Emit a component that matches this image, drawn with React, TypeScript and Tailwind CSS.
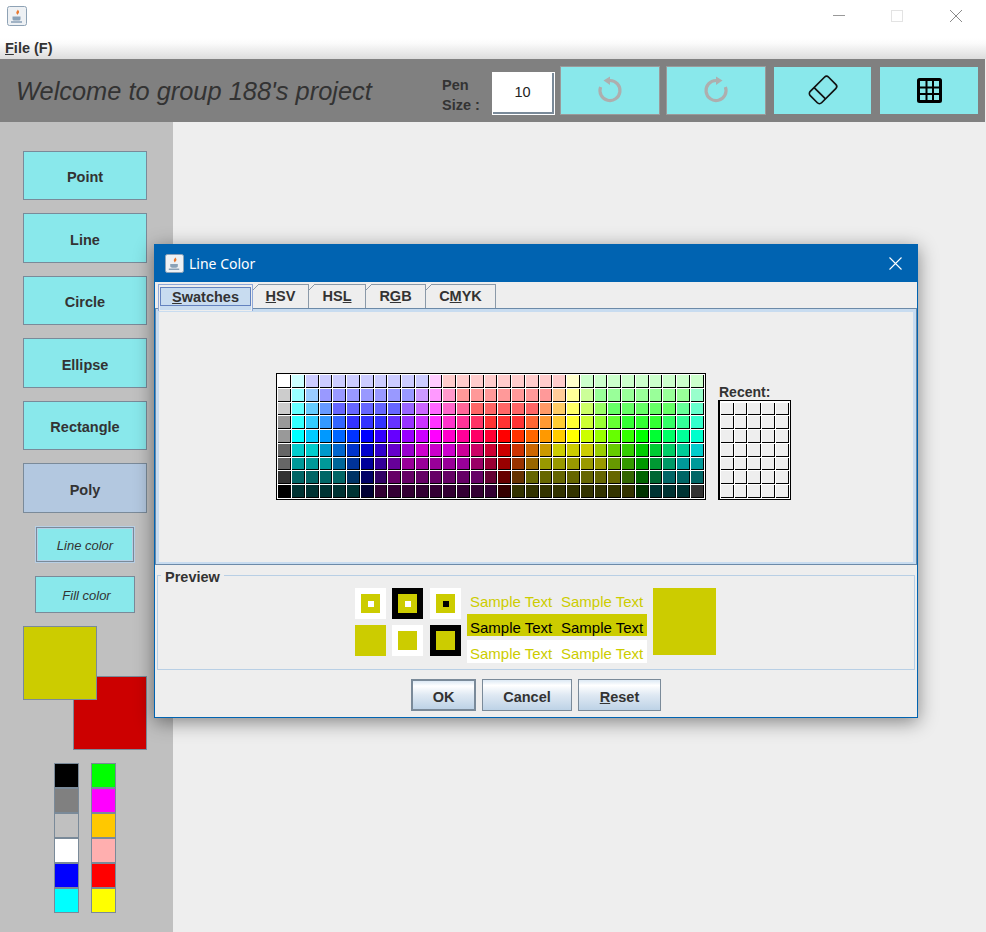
import React from "react";

const swatchRows = [
  "ffffff ccffff ccccff*9 ffccff ffcccc*9 ffffcc ccffcc*9",
  "cccccc 99ffff 99ccff 9999ff*7 cc99ff ff99ff ff99cc ff9999*7 ffcc99 ffff99 ccff99 99ff99*7 99ffcc",
  "cccccc 66ffff 66ccff 6699ff 6666ff*5 9966ff cc66ff ff66ff ff66cc ff6699 ff6666*5 ff9966 ffcc66 ffff66 ccff66 99ff66 66ff66*5 66ff99 66ffcc",
  "999999 33ffff 33ccff 3399ff 3366ff 3333ff*3 6633ff 9933ff cc33ff ff33ff ff33cc ff3399 ff3366 ff3333*3 ff6633 ff9933 ffcc33 ffff33 ccff33 99ff33 66ff33 33ff33*3 33ff66 33ff99 33ffcc",
  "999999 00ffff 00ccff 0099ff 0066ff 0033ff 0000ff 3300ff 6600ff 9900ff cc00ff ff00ff ff00cc ff0099 ff0066 ff0033 ff0000 ff3300 ff6600 ff9900 ffcc00 ffff00 ccff00 99ff00 66ff00 33ff00 00ff00 00ff33 00ff66 00ff99 00ffcc",
  "666666 00cccc*2 0099cc 0066cc 0033cc 0000cc 3300cc 6600cc 9900cc cc00cc*3 cc0099 cc0066 cc0033 cc0000 cc3300 cc6600 cc9900 cccc00*3 99cc00 66cc00 33cc00 00cc00 00cc33 00cc66 00cc99 00cccc",
  "666666 009999*3 006699 003399 000099 330099 660099 990099*5 990066 990033 990000 993300 996600 999900*5 669900 339900 009900 009933 009966 009999*2",
  "333333 006666*4 003366 000066 330066 660066*7 660033 660000 663300 666600*7 336600 006600 006633 006666*3",
  "000000 003333*5 000033 330033*9 330000 333300*9 003300 003333*3 333333",
];

// rows are written as colour*count to keep them short
const swatches = swatchRows.flatMap((row) =>
  row.split(" ").flatMap((part) => {
    const [c, n] = part.split("*");
    return Array.from({ length: Number(n ?? 1) }, () => "#" + c);
  })
);

const paletteLeft = ["#000000", "#808080", "#c0c0c0", "#ffffff", "#0000ff", "#00ffff"];
const paletteRight = ["#00ff00", "#ff00ff", "#ffc800", "#ffafaf", "#ff0000", "#ffff00"];

const JavaIcon = ({ className }: { className?: string }) => (
  <svg viewBox="0 0 20 20" className={className}>
    <rect x="0.5" y="0.5" width="19" height="19" rx="2" fill="#eef1f4" stroke="#8ea2b5" />
    <path d="M10.5 3c1 1.5-2 2.5-1 4.5.3.7.8 1 1 1.500-.1-1 2.200-2 1.500-3.500C11.700 4.500 10.800 4 10.500 3z" fill="#e8772e" />
    <path d="M5.500 10.500h8v2.500c0 1-1 1.500-2 1.500h-4c-1 0-2-.5-2-1.500z" fill="#8aa2b8" />
    <path d="M4 16h11" stroke="#6f8ba5" strokeWidth="1.200" />
  </svg>
);

const UndoIcon = ({ flip }: { flip?: boolean }) => (
  <svg viewBox="0 0 26 28" className={flip ? "w-[26px] h-[28px] -scale-x-100" : "w-[26px] h-[28px]"}>
    <path d="M13 4.500A10 10 0 1 1 3.600 11" fill="none" stroke="#aeaeae" strokeWidth="3.200" />
    <path d="M6.500 4.500L13 .5V9z" fill="#aeaeae" />
  </svg>
);

const EraserIcon = () => (
  <svg viewBox="0 0 30 30" className="w-[30px] h-[30px]">
    <g transform="rotate(-45 15 15)" fill="none" stroke="#111" strokeWidth="1.700">
      <rect x="2" y="7" width="26" height="16" rx="3" />
      <path d="M10.500 7v16" />
    </g>
  </svg>
);

const GridIcon = () => (
  <svg viewBox="0 0 25 25" className="w-[25px] h-[25px]">
    <rect x="1.500" y="1.500" width="22" height="22" rx="1" fill="none" stroke="#000" strokeWidth="3" />
    <path d="M9.500 2v21M16 2v21M2 9.500h21M2 16h21" stroke="#000" strokeWidth="2" />
  </svg>
);

const ToolButton = ({ children, className }: { children: React.ReactNode; className: string }) => (
  <div className={`flex items-center justify-center h-[49px] bg-[#89e8eb] border border-[#9a9a9a] ${className}`}>
    {children}
  </div>
);

const SideButton = ({ label, className }: { label: string; className?: string }) => (
  <div
    className={`w-[124px] flex items-center justify-center border border-[#7a8a99] font-bold text-[14.500px] text-[#333] ${className}`}
  >
    {label}
  </div>
);

const Tab = ({ children, className }: { children: React.ReactNode; className: string }) => (
  <div className={`relative h-[24px] flex items-center justify-center pt-[2px] border-r border-[#8a99a8] font-bold text-[14.500px] text-[#333] ${className}`}>
    <div className="absolute top-0 left-[5px] right-0 h-px bg-[#8a99a8]" />
    <svg viewBox="0 0 6 6" className="absolute top-0 left-0 w-[6px] h-[6px]">
      <path d="M0 6L6 0" stroke="#8a99a8" strokeWidth="1" />
    </svg>
    {children}
  </div>
);

const DialogButton = ({ children, className }: { children: React.ReactNode; className: string }) => (
  <div
    className={`h-[32px] flex items-center justify-center pt-[5px] bg-[linear-gradient(#dde9f4,#ffffff_18%,#dfe9f3_50%,#bdd2e6)] font-bold text-[14.500px] text-[#333] ${className}`}
  >
    {children}
  </div>
);

const PreviewBox = ({ outer, inner, dot }: { outer: string; inner: string; dot?: string }) => (
  <div className={`w-[31px] h-[31px] flex items-center justify-center ${outer}`}>
    <div className={`w-[19px] h-[19px] flex items-center justify-center ${inner}`}>
      {dot && <div className={`w-[6px] h-[6px] ${dot}`} />}
    </div>
  </div>
);

const SampleRow = ({ className }: { className: string }) => (
  <div className={`w-[180px] flex items-center pl-[3px] text-[15px] ${className}`}>
    <span className="w-[91px]">Sample Text</span>
    <span>Sample Text</span>
  </div>
);

export default function App() {
  return (
    <div className="relative w-[986px] h-[932px] overflow-hidden bg-[#eeeeee] font-['Liberation_Sans',Arial,sans-serif]">
      <div className="h-[38px] bg-white flex items-center pl-[7px] pb-[7px] relative">
        <JavaIcon className="w-[20px] h-[20px]" />
        <div className="ml-auto flex items-center pr-[24px]">
          <div className="w-[12px] h-px bg-[#999]" />
          <div className="ml-[46px] w-[12px] h-[12px] border border-[#e3e3e3]" />
          <svg viewBox="0 0 12 12" className="ml-[47px] w-[12px] h-[12px]">
            <path d="M0 0L12 12M12 0L0 12" stroke="#8a8a8a" strokeWidth="1" />
          </svg>
        </div>
      </div>

      <div className="h-[21px] bg-[linear-gradient(#ffffff,#fbfbfb_25%,#dcdcdc)] flex items-center pl-[5px] font-bold text-[14.500px] text-[#333]">
        <span>
          <span className="underline">F</span>ile (F)
        </span>
      </div>

      <div className="h-[63px] w-[985px] bg-[#808080] flex items-center">
        <div className="w-[442px] pl-[16px] italic text-[25.400px] text-[#333] pt-[2px]">
          Welcome to group 188's project
        </div>
        <div className="w-[50px] pt-[8px] font-bold text-[14.500px] leading-[20px] text-[#333]">
          <div>Pen</div>
          <div>Size :</div>
        </div>
        <div className="w-[61px] h-[41px] ml-[1px] mt-[5px] bg-white border-r-2 border-b-2 border-[#7a8a99] outline outline-white flex items-center justify-center pt-[2px] text-[14.500px] text-[#222]">
          10
        </div>
        <ToolButton className="w-[100px] ml-[6px] -mt-px">
          <UndoIcon />
        </ToolButton>
        <ToolButton className="w-[100px] ml-[6px] -mt-px">
          <UndoIcon flip />
        </ToolButton>
        <ToolButton className="w-[99px] ml-[7px] -mt-px border-[#808080]">
          <EraserIcon />
        </ToolButton>
        <ToolButton className="w-[100px] ml-[7px] -mt-px border-[#808080]">
          <GridIcon />
        </ToolButton>
      </div>

      <div className="flex h-[810px]">
        <div className="w-[173px] bg-[#c0c0c0] pt-[29px] flex flex-col items-start">
          <div className="ml-[23px] flex flex-col gap-[13px]">
            <SideButton label="Point" className="h-[49px] pt-[4px] bg-[#89e8eb]" />
            <SideButton label="Line" className="h-[50px] pt-[5px] bg-[#89e8eb]" />
            <SideButton label="Circle" className="h-[49px] pt-[4px] bg-[#89e8eb]" />
            <SideButton label="Ellipse" className="h-[50px] pt-[5px] bg-[#89e8eb]" />
            <SideButton label="Rectangle" className="h-[49px] pt-[4px] bg-[#89e8eb]" />
            <SideButton label="Poly" className="h-[50px] pt-[5px] bg-[#b3c8e0]" />
          </div>
          <div className="ml-[36px] mt-[14px] w-[98px] h-[35px] flex items-center justify-center pt-[2px] bg-[#89e8eb] border border-[#7a8a99] outline outline-[#b8cfe5] -outline-offset-2 ring-1 ring-[#b8cfe5] italic text-[13px] text-[#333]">
            Line color
          </div>
          <div className="ml-[35px] mt-[14px] w-[100px] h-[37px] flex items-center justify-center pt-[2px] bg-[#89e8eb] border border-[#7a8a99] italic text-[13px] text-[#333] pl-[3px]">
            Fill color
          </div>
          <div className="ml-[23px] mt-[13px] w-[74px] h-[74px] bg-[#cccc00] border border-[#7a8a99] relative z-10" />
          <div className="ml-[73px] -mt-[24px] w-[74px] h-[74px] bg-[#cc0000] border border-[#7a8a99]" />
          <div className="ml-[54px] mt-[13px] flex gap-[12px]">
            {[paletteLeft, paletteRight].map((col, i) => (
              <div key={i} className="flex flex-col">
                {col.map((c) => (
                  <div key={c} className="w-[25px] h-[25px] border border-[#7a8a99]" style={{ backgroundColor: c }} />
                ))}
              </div>
            ))}
          </div>
        </div>
        <div className="flex-1" />
      </div>

      {/* Line Color dialog */}
      <div className="absolute left-[154px] top-[244px] w-[764px] h-[474px] bg-[#eeeeee] border border-[#0063b1] shadow-[0_4px_18px_rgba(0,0,0,0.45)]">
        <div className="h-[37px] bg-[#0063b1] flex items-center pl-[10px] pr-[15px]">
          <JavaIcon className="w-[19px] h-[19px]" />
          <span className="ml-[5px] font-['Noto_Sans',sans-serif] text-[14px] text-white">Line Color</span>
          <svg viewBox="0 0 13 13" className="ml-auto w-[13px] h-[13px]">
            <path d="M0.500 0.500L12.500 12.500M12.500 0.500L0.500 12.500" stroke="#fff" strokeWidth="1.100" />
          </svg>
        </div>

        <div className="flex pt-[2px] pl-[3px] h-[26px]">
          <div className="relative w-[95px] h-[27px] z-10 border border-[#8fa8d8] border-b-0 px-px pt-[2px] bg-[#eeeeee]">
            <div className="h-[19px] flex items-center justify-center pt-[2px] bg-[#c8dcf0] border border-[#6382bf] font-bold text-[14.500px] text-[#333]">
              <span>
                <span className="underline">S</span>watches
              </span>
            </div>
            <div className="h-[4px] bg-[#c8dcf0]" />
          </div>
          <Tab className="w-[56px]">
            <span>
              <span className="underline">H</span>SV
            </span>
          </Tab>
          <Tab className="w-[57px]">
            <span>
              HS<span className="underline">L</span>
            </span>
          </Tab>
          <Tab className="w-[60px]">
            <span>
              R<span className="underline">G</span>B
            </span>
          </Tab>
          <Tab className="w-[70px]">
            <span>
              C<span className="underline">M</span>YK
            </span>
          </Tab>
        </div>

        <div className="h-[257px] border border-[#6c8aa8]">
          <div className="h-full border-[3px] border-b-2 border-[#c8dcf0] flex items-start pl-[117px] pt-[61px]">
            <div className="border border-black bg-white pl-px pt-px w-[430px] h-[127px]">
              <div className="grid grid-cols-[repeat(7,14px_14px_14px_13px)_14px_14px_14px] grid-rows-[14px_14px_13px_14px_14px_14px_13px_14px_14px]">
                {swatches.map((c, i) => (
                  <div key={i} className="mr-px mb-px border-r border-b border-black" style={{ backgroundColor: c }} />
                ))}
              </div>
            </div>
            <div className="ml-[12px] flex flex-col">
              <div className="h-[27px] pt-[12px] font-bold text-[14px] leading-[15px] text-[#333] pl-px">Recent:</div>
              <div className="border border-l-2 border-black bg-white pl-px pt-[2px] w-[73px] h-[100px]">
                <div className="grid grid-cols-[14px_13px_14px_14px_14px] grid-rows-[13px_14px_14px_14px_13px_14px_14px]">
                  {Array.from({ length: 35 }, (_, i) => (
                    <div key={i} className="mr-px mb-px border-r border-b border-black bg-[#eeeeee]" />
                  ))}
                </div>
              </div>
            </div>
          </div>
        </div>

        <div className="relative ml-[2px] mt-[10px] w-[758px] h-[95px] border border-[#b8cfe5] pl-[197px] pt-[12px] flex">
          <span className="absolute -top-[7px] left-[3px] px-[4px] bg-[#eeeeee] font-bold text-[14.500px] leading-[16px] text-[#333]">
            Preview
          </span>
          <div className="flex flex-col gap-[6px]">
            <div className="flex gap-[6px]">
              <PreviewBox outer="bg-white" inner="bg-[#cccc00]" dot="bg-white" />
              <PreviewBox outer="bg-black" inner="bg-[#cccc00]" dot="bg-white" />
              <PreviewBox outer="bg-white ml-px" inner="bg-[#cccc00]" dot="bg-black" />
            </div>
            <div className="flex gap-[6px]">
              <PreviewBox outer="bg-[#cccc00]" inner="bg-[#cccc00]" />
              <PreviewBox outer="bg-white" inner="bg-[#cccc00]" />
              <PreviewBox outer="bg-black ml-px" inner="bg-[#cccc00]" />
            </div>
          </div>
          <div className="ml-[6px] flex flex-col">
            <SampleRow className="h-[26px] pt-[2px] text-[#cccc00]" />
            <SampleRow className="h-[22px] pt-[7px] bg-[#cccc00] text-black" />
            <SampleRow className="h-[23px] mt-[4px] pt-[5px] bg-white text-[#cccc00]" />
          </div>
          <div className="ml-[6px] w-[63px] h-[67px] bg-[#cccc00]" />
        </div>

        <div className="mt-[9px] flex justify-center gap-[6px]">
          <DialogButton className="w-[65px] border-2 border-[#7a8a99]">OK</DialogButton>
          <DialogButton className="w-[90px] border border-[#7a8a99]">Cancel</DialogButton>
          <DialogButton className="w-[83px] border border-[#7a8a99]">
            <span>
              <span className="underline">R</span>eset
            </span>
          </DialogButton>
        </div>
      </div>
    </div>
  );
}
